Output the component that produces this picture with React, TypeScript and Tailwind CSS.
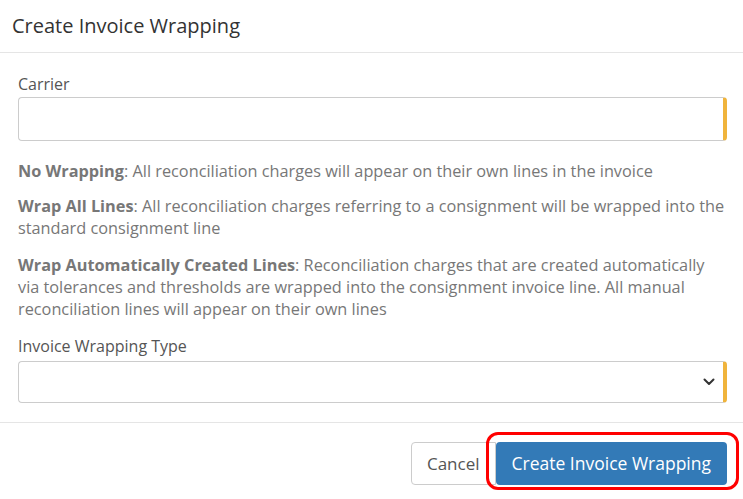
import React from "react";

export default function App() {
  return (
    <div
      className="w-[743px] h-[499px] bg-white overflow-hidden relative"
      style={{ fontFamily: '"Open Sans", "Noto Sans", sans-serif' }}
    >
      <div className="h-[53px] border-b border-[#e5e5e5] flex items-center px-[12px]">
        <h1 className="text-[20px] text-[#333333] leading-none">Create Invoice Wrapping</h1>
      </div>
      <div className="pl-[18px] pr-[16px] pt-[20px] pb-[19px]">
        <label className="block text-[16px] leading-[22px] text-[#555555] mb-[2px]">Carrier</label>
        <div className="h-[44px] border border-[#cccccc] border-r-[4px] border-r-[#f0b43c] rounded-[4px]" />
        <div className="text-[16.3px] leading-[22px] text-[#777777]">
          <p className="mt-[19px]">
            <b className="font-bold">No Wrapping</b>: All reconciliation charges will appear on their own lines in the invoice
          </p>
          <p className="mt-[13px]">
            <b className="font-bold">Wrap All Lines</b>: All reconciliation charges referring to a consignment will be wrapped into the standard consignment line
          </p>
          <p className="mt-[15px]">
            <b className="font-bold">Wrap Automatically Created Lines</b>: Reconciliation charges that are created automatically via tolerances and thresholds are wrapped into the consignment invoice line. All manual reconciliation lines will appear on their own lines
          </p>
        </div>
        <label className="block mt-[15px] text-[16px] leading-[22px] text-[#555555] mb-[4px]">Invoice Wrapping Type</label>
        <div className="h-[42px] border border-[#cccccc] border-r-[4px] border-r-[#f0b43c] rounded-[4px] flex items-center justify-end pr-[8px]">
          <svg width="12" height="8" viewBox="0 0 12 8" fill="none">
            <path d="M1.5 1.5 L6 6 L10.5 1.5" stroke="#333" strokeWidth="2" strokeLinecap="round" strokeLinejoin="round" />
          </svg>
        </div>
      </div>
      <div className="border-t border-[#e5e5e5] pt-[19px] pr-[16px] flex justify-end">
        <button className="h-[43px] px-[15px] border border-[#cccccc] rounded-l-[4px] bg-white text-[17px] text-[#555555]">
          Cancel
        </button>
        <div className="relative">
          <button className="h-[43px] px-[16px] bg-[#337ab7] rounded-[4px] text-[17.5px] text-white">
            Create Invoice Wrapping
          </button>
          <div className="absolute left-[-10px] right-[-12px] top-[-10px] bottom-[-5px] border-[3px] border-[#ff0000] rounded-[12px] pointer-events-none" />
        </div>
      </div>
    </div>
  );
}
